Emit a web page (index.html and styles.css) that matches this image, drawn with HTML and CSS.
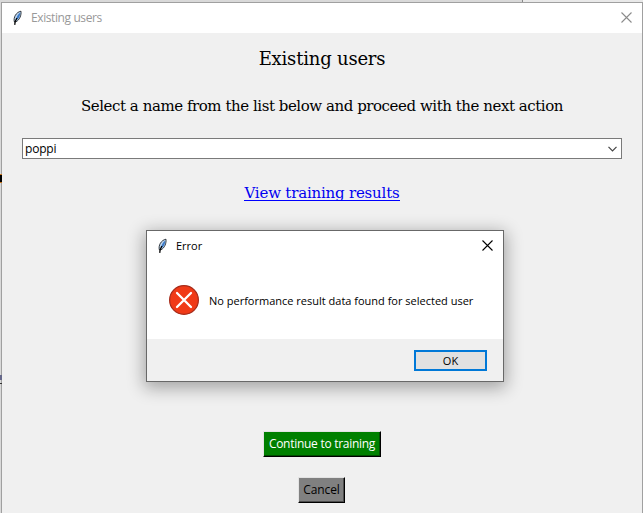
FILE: index.html
```html
<!DOCTYPE html>
<html lang="en">
<head>
<meta charset="utf-8">
<title>Existing users</title>
<link rel="stylesheet" href="styles.css">
</head>
<body>
<svg class="defs" width="0" height="0" aria-hidden="true">
  <symbol id="feather" viewBox="0 0 12 16">
    <path d="M2.600 12.300C1.200 7.500 4.500 1.500 9.800.6c.5 4.200-1.300 9.500-5.600 11.600z" fill="#bcd5ee" stroke="#20262e" stroke-width="1"/>
    <path d="M4.500 10.500C4.600 7 6.600 3.800 9 2c0 3.500-1.600 7-4.500 8.500z" fill="#3978c6"/>
    <path d="M3 15.500l.4-3.500 2-4" fill="none" stroke="#000" stroke-width="1.400"/>
  </symbol>
  <symbol id="close" viewBox="0 0 11 11">
    <path d="M.5.5l10 10M10.500.5l-10 10" fill="none" stroke="currentColor" stroke-width="1.100"/>
  </symbol>
</svg>
<div class="edge edge-top"></div>
<div class="edge mark-dark"></div>
<div class="edge mark-line"></div>
<div class="window">
  <header class="titlebar">
    <svg class="feather"><use href="#feather"/></svg>
    <span class="title">Existing users</span>
    <svg class="close"><use href="#close"/></svg>
  </header>
  <main class="content">
    <h1><span>Existing users</span></h1>
    <p class="hint"><span>Select a name from the list below and proceed with the next action</span></p>
    <div class="combo">
      <span>poppi</span>
      <svg class="chevron" viewBox="0 0 9 6"><path d="M.5.800l4 4 4-4" fill="none" stroke="#444" stroke-width="1.200"/></svg>
    </div>
    <a class="link"><span>View training results</span></a>
    <div class="actions">
      <button class="btn go"><span>Continue to training</span></button>
      <button class="btn cancel"><span>Cancel</span></button>
    </div>
  </main>
</div>
<section class="dialog" role="dialog">
  <header class="titlebar">
    <svg class="feather"><use href="#feather"/></svg>
    <span class="title">Error</span>
    <svg class="close"><use href="#close"/></svg>
  </header>
  <div class="message">
    <svg class="error" viewBox="0 0 30 30"><circle cx="15" cy="15" r="14.400" fill="#f03a17" stroke="#a52c1b" stroke-width="1.200"/><path d="M8 8l14 14M22 8L8 22" stroke="#fff" stroke-width="2.300" stroke-linecap="round"/></svg>
    <span>No performance result data found for selected user</span>
  </div>
  <footer><button class="ok">OK</button></footer>
</section>
</body>
</html>
```

FILE: styles.css
```css
* { box-sizing: border-box; }
body {
  margin: 0;
  width: 643px;
  height: 513px;
  overflow: hidden;
  position: relative;
  padding: 2px 0 0 1px;
  background: #d9d9d9;
  font: 12px/16px "Open Sans", "Noto Sans", sans-serif;
  color: #000;
}
.defs { position: absolute; }
.edge { position: absolute; left: 0; }
.edge-top { left: 522px; top: 0; width: 121px; height: 2px; background: #e9e9e9; border-left: 1px solid #888; }
.mark-dark { top: 174px; width: 2px; height: 9px; background: #000; border-top: 1px solid #c87820; border-bottom: 1px solid #c87820; }
.mark-line { top: 375px; width: 2px; height: 9px; border-top: 5px solid #66688a; border-bottom: 1px solid #333; }
.window {
  width: 642px;
  height: 520px;
  border: 1px solid #a0a0a0;
  background: #f0f0f0;
}
.titlebar {
  display: flex;
  align-items: center;
  height: 30px;
  background: #fff;
  padding: 0 10px;
}
.feather { width: 11px; height: 16px; }
.close { width: 11px; height: 11px; margin-left: auto; }
.window > .titlebar .title { margin-left: 8px; color: #999; letter-spacing: -0.4px; }
.window > .titlebar .close { color: #8b8b8b; margin-top: -2px; }
.content { display: flex; flex-direction: column; align-items: center; }
h1, .hint, .link { font-family: "DejaVu Serif", serif; font-weight: 400; margin: 0; white-space: nowrap; }
h1 { font-size: 18px; line-height: 24px; margin-top: 14px; letter-spacing: -0.2px; }
.hint { font-size: 15px; line-height: 20px; margin-top: 25px; letter-spacing: -0.45px; }
.combo {
  display: flex;
  align-items: center;
  justify-content: space-between;
  width: 600px;
  height: 21px;
  margin-top: 22px;
  padding: 0 4px 0 2px;
  border: 1px solid #7a7a7a;
  background: #fff;
}
.combo span { font-weight: 500; letter-spacing: -0.2px; }
.chevron { width: 9px; height: 6px; }
.link { font-size: 15px; line-height: 20px; height: 18px; margin-top: 24px; color: #0000f0; border-bottom: 1px solid #00f; letter-spacing: -0.2px; }
.actions { display: flex; flex-direction: column; align-items: center; gap: 20px; width: 118px; margin-top: 230px; }
.btn {
  height: 26px;
  padding: 0;
  font: inherit;
  white-space: nowrap;
  border: 1px solid;
  border-color: #e3e3e3 #000 #000 #e3e3e3;
}
.go { width: 118px; background: #008000; color: #fff; box-shadow: inset -1px -1px #004d00; letter-spacing: -0.28px; }
.cancel { width: 47px; margin-right: 1px; background: #808080; box-shadow: inset -1px -1px #4d4d4d; letter-spacing: -0.1px; }
.dialog {
  position: absolute;
  left: 146px;
  top: 230px;
  width: 358px;
  height: 152px;
  border: 1px solid #686868;
  background: #fff;
  box-shadow: 0 4px 16px 2px rgba(0, 0, 0, .32);
  font-size: 11px;
}
.dialog .title { margin-left: 8px; }
.dialog .close { margin-top: -2px; }
.message { display: flex; align-items: center; gap: 10px; height: 78px; padding-left: 22px; white-space: nowrap; }
.message span { padding-top: 1px; }
.error { width: 30px; height: 30px; }
.dialog footer { display: flex; justify-content: flex-end; height: 42px; padding: 11px 16px; background: #f0f0f0; }
.ok { width: 73px; height: 21px; padding: 0; font: inherit; border: 2px solid #0078d7; background: #e1e1e1; }
```
